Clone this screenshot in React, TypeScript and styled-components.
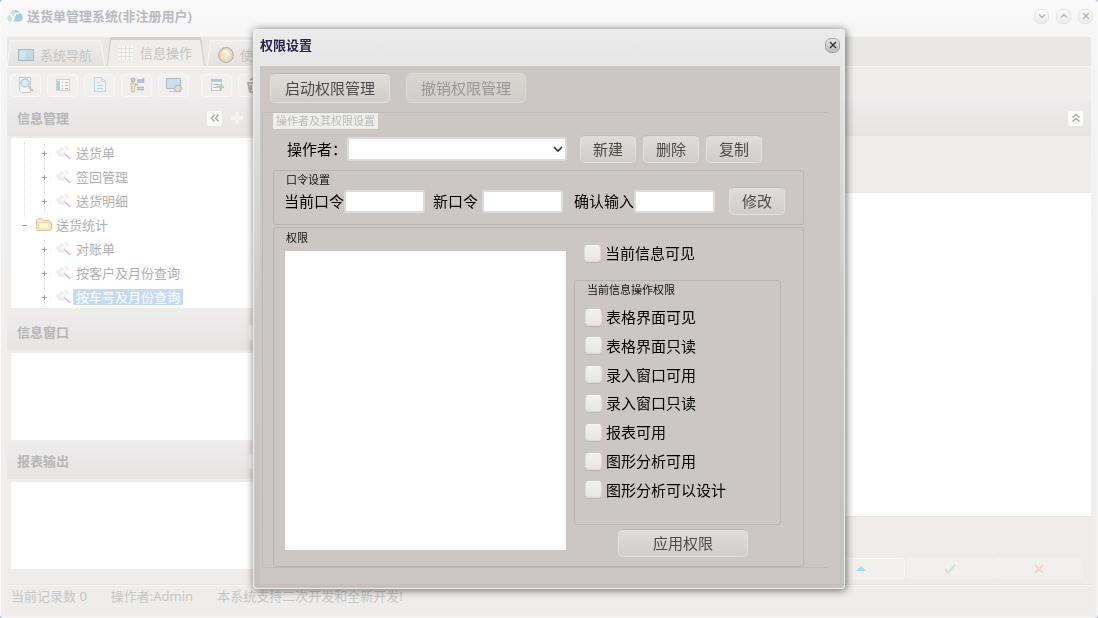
import React from 'react';
import styled, { createGlobalStyle } from 'styled-components';

const GlobalStyle = createGlobalStyle`
  * { box-sizing: border-box; }
  body { margin: 0; background: #a9bdd6; }
  body, button, input, select {
    font-family: "Noto Sans", "Noto Sans CJK SC", sans-serif;
    font-size: 13px;
    line-height: 18px;
  }
  button { margin: 0; padding: 0; border: 0; background: none; }
`;

/* ---------- Main window ---------- */

const Window = styled.div`
  display: flex;
  flex-direction: column;
  min-height: 100vh;
  padding: 0 6px 4px;
  border: 1px solid #fbfbfb;
  border-width: 0 1px 1px;
  border-radius: 4px;
  background: linear-gradient(#fafafa 0, #f6f6f6 37px, #f3f2f2 200px, #efeeec 60%);
`;

const TitleBar = styled.header`
  display: flex;
  align-items: center;
  height: 37px;
  padding: 0 0 5px;
`;

const Title = styled.h1`
  flex: 1;
  margin: 0 0 0 4px;
  font-size: 13px;
  line-height: 18px;
  font-weight: 700;
  color: #b9b9c3;
`;

const RoundButton = styled.button<{ $strong?: boolean }>`
  display: flex;
  align-items: center;
  justify-content: center;
  width: 15px;
  height: 15px;
  border: 1px solid ${(p) => (p.$strong ? '#a5a3a1' : '#e2e2e2')};
  border-radius: 6px;
  background: ${(p) => (p.$strong ? 'linear-gradient(#e6e6e6, #bdbbb9)' : 'linear-gradient(#fafafa, #ececec)')};
  color: ${(p) => (p.$strong ? '#333' : '#b5b5b5')};
`;

const WindowButtons = styled.div`
  display: flex;
  gap: 7px;
  margin-right: -2px;
`;

const TabStrip = styled.nav`
  display: flex;
  align-items: flex-end;
  gap: 2px;
  height: 30px;
  border-bottom: 1px solid #f8f8f7;
  background: #e9e8e6;
`;

const Tab = styled.button<{ $active?: boolean }>`
  position: relative;
  z-index: 0;
  display: flex;
  align-items: center;
  gap: 6px;
  width: 98px;
  height: ${(p) => (p.$active ? 29 : 26)}px;
  padding: 3px 0 0 11px;
  background: ${(p) => (p.$active ? '#d3d0cf' : '#f6f5f4')};
  clip-path: polygon(3px 0, calc(100% - 4px) 0, 100% 100%, 0 100%);
  color: #c4c4c4;
  &::before {
    content: '';
    position: absolute;
    z-index: -1;
    inset: ${(p) => (p.$active ? '3px 1px 0' : '1px 1px 0')};
    background: ${(p) => (p.$active ? '#efeeec' : 'linear-gradient(#f0efed, #e4e1e0)')};
    clip-path: polygon(3px 0, calc(100% - 4px) 0, 100% 100%, 0 100%);
  }
`;

const Toolbar = styled.div`
  display: flex;
  align-items: center;
  gap: 6px;
  height: 33px;
  padding: 3px 3px 0;
  background: #efeeec;
`;

const ToolButton = styled.button`
  display: flex;
  align-items: center;
  justify-content: center;
  width: 31px;
  height: 23px;
  border: 1px solid #f8f7f6;
  border-radius: 4px;
  background: #f1f0ee;
  &:nth-child(6) { margin-left: 6px; }
`;

const Workspace = styled.div`
  display: flex;
  flex: 1;
  background: #eeedeb;
  border-bottom: 1px solid #e6e5e3;
`;

const Sidebar = styled.aside`
  display: flex;
  flex-direction: column;
  width: 265px;
`;

const PanelHeader = styled.div<{ $inset?: boolean }>`
  display: flex;
  align-items: center;
  gap: 9px;
  height: 36px;
  padding: 0 ${(p) => (p.$inset ? 29 : 8)}px 0 10px;
  background: linear-gradient(#edebec, #e6e5e3);
`;

const PanelTitle = styled.h2`
  flex: 1;
  margin: 0;
  font-size: 13px;
  line-height: 18px;
  font-weight: 700;
  color: #b6b6b5;
`;

const CollapseButton = styled.button`
  display: flex;
  align-items: center;
  justify-content: center;
  width: 15px;
  height: 15px;
  border-radius: 2px;
  background: #fbfbfa;
  color: #a5a5a5;
`;

const PanelBody = styled.div<{ $height: number }>`
  height: ${(p) => p.$height}px;
  margin: 3px 0 3px 4px;
  overflow: hidden;
  background: #fff;
`;

const TreeBody = styled(PanelBody)`
  margin-top: 2px;
  margin-bottom: 6px;
`;

const TreeList = styled.ul`
  position: relative;
  margin: 0;
  padding: 3px 0 0;
  list-style: none;
  &::before {
    content: '';
    position: absolute;
    left: 13px;
    top: 4px;
    height: 76px;
    border-left: 1px dotted #ddd;
  }
`;

const TreeRow = styled.li<{ $leaf?: boolean }>`
  display: flex;
  align-items: center;
  height: 24px;
  padding-left: ${(p) => (p.$leaf ? 25 : 5)}px;
`;

const Expander = styled.button`
  display: flex;
  width: 16px;
  height: 24px;
  margin-right: 4px;
  color: #a0a0a0;
`;

const TreeLabel = styled.span<{ $selected?: boolean }>`
  margin-left: 1px;
  padding: 0 3px;
  line-height: 16px;
  background: ${(p) => (p.$selected ? '#c6dbf2' : 'transparent')};
  color: ${(p) => (p.$selected ? '#fff' : '#b0b0b0')};
`;

const MainArea = styled.main`
  display: flex;
  flex: 1;
  flex-direction: column;
`;

const Sheet = styled.div`
  height: 325px;
  margin-top: 56px;
  border-bottom: 1px solid #e9e8e6;
  border-top: 1px solid #e9e8e6;
  background: #fff;
`;

const Navigator = styled.div`
  display: flex;
  justify-content: flex-end;
  gap: 1px;
  margin-top: auto;
  padding: 0 8px 5px 0;
`;

const NavButton = styled.button<{ $dim?: boolean }>`
  display: flex;
  align-items: center;
  justify-content: center;
  width: 88px;
  height: 21px;
  border: 1px solid ${(p) => (p.$dim ? '#f3f2f1' : '#f8f8f7')};
  border-radius: 4px;
  background: #f1f0ef;
`;

const StatusBar = styled.footer`
  display: flex;
  gap: 24px;
  height: 28px;
  padding: 1px 4px 0;
  border-top: 1px solid #f6f5f4;
  background: #eeedeb;
  color: #c6c6c6;
`;

/* ---------- Dialog ---------- */

const Overlay = styled.div`
  position: fixed;
  inset: 0;
  display: flex;
  align-items: center;
  justify-content: center;
`;

const DialogBox = styled.section`
  width: 592px;
  padding: 0 4px 4px 6px;
  border: 1px solid #efefee;
  border-radius: 4px;
  background: linear-gradient(#ebebeb 0, #e5e5e5 40px, #cdc9c7 50%, #c6c0bd);
  box-shadow: 1px 1px 8px 0 rgba(0, 0, 0, 0.6);
`;

const DialogHeader = styled.header`
  display: flex;
  align-items: center;
  justify-content: space-between;
  height: 36px;
  padding: 0 0 6px;
`;

const DialogTitle = styled.h2`
  margin: 0;
  font-size: 13px;
  line-height: 18px;
  color: #26224a;
`;

const DialogBody = styled.form`
  padding: 7px 12px 16px 2px;
  background: #ccc7c4;
`;

const ActionRow = styled.div`
  display: flex;
  gap: 16px;
  padding-left: 8px;
`;

const PushButton = styled.button<{ $width: number; $tall?: boolean }>`
  width: ${(p) => p.$width}px;
  height: ${(p) => (p.$tall ? 30 : 28)}px;
  border: 1px solid #e2dfdc;
  border-top-color: #bfbab7;
  border-radius: 5px;
  background: linear-gradient(#e0ddda, #d1cdc8);
  font-size: 15px;
  line-height: 20px;
  color: #4a4a4a;
  &:disabled {
    border-color: #dcd9d6;
    background: linear-gradient(#d9d6d2, #d1cec9);
    color: #999795;
  }
`;

const Operators = styled.fieldset`
  display: flex;
  flex-direction: column;
  min-width: 0;
  margin: 9px 0 0;
  padding: 0 24px 0 10px;
  border: 1px solid #bfbab7;
  border-right: 0;
  border-radius: 4px 0 0 4px;
`;

const OperatorsLegend = styled.legend`
  float: left;
  align-self: flex-start;
  padding: 0 3px;
  background: #eeeeed;
  font-size: 11px;
  line-height: 16px;
  color: #b9b9b9;
`;

const OperatorRow = styled.div`
  display: flex;
  align-items: center;
  gap: 7px;
  margin-top: 6px;
  padding-left: 14px;
`;

const Label = styled.label<{ $width?: number }>`
  width: ${(p) => (p.$width ? `${p.$width}px` : 'auto')};
  font-size: 15px;
  line-height: 20px;
  white-space: nowrap;
  color: #000;
`;

const SelectWrap = styled.div`
  display: flex;
  align-items: center;
  margin-right: 10px;
`;

const OperatorSelect = styled.select`
  width: 220px;
  height: 24px;
  border: 2px solid #dddcdb;
  border-radius: 3px;
  background: #fff;
  appearance: none;
`;

const SelectArrow = styled.svg`
  position: relative;
  width: 10px;
  margin-left: -14px;
  pointer-events: none;
`;

const Group = styled.fieldset`
  display: flex;
  flex-direction: column;
  min-width: 0;
  margin: 0;
  padding: 2px 0 0 10px;
  border: 1px solid #b9b4b1;
  border-radius: 3px;
`;

const PasswordGroup = styled(Group)`
  margin-top: 7px;
  padding-bottom: 9px;
`;

const RightsGroup = styled(Group)`
  margin-top: 2px;
  padding-top: 3px;
  padding-bottom: 9px;
`;

const DetailGroup = styled(Group)`
  flex: 1;
  margin: 18px 0 4px;
  padding-bottom: 25px;
`;

const GroupLegend = styled.legend`
  float: left;
  padding: 0 0 0 2px;
  font-size: 11px;
  line-height: 13px;
  color: #111;
`;

const PasswordRow = styled.div`
  display: grid;
  grid-template-columns: 149px 141px 155px 56px;
  align-items: center;
  margin-top: 1px;
`;

const Field = styled.div`
  display: flex;
  align-items: center;
`;

const PasswordInput = styled.input`
  width: 81px;
  height: 23px;
  padding: 0 3px;
  border: 2px solid #dddcdb;
  border-radius: 3px;
  background: #fff;
`;

const RightsColumns = styled.div`
  display: grid;
  grid-template-columns: 281px 207px;
  gap: 8px;
  padding-left: 1px;
`;

const InfoList = styled.select`
  width: 100%;
  height: auto;
  margin: 7px 0;
  border: 0;
  border-radius: 0;
  background: #fff;
  appearance: none;
`;

const RightsColumn = styled.div`
  display: flex;
  flex-direction: column;
  height: 313px;
`;

const CheckRow = styled.div<{ $indent?: boolean }>`
  display: flex;
  align-items: center;
  gap: 4px;
  height: 18px;
  padding-left: ${(p) => (p.$indent ? 10 : 0)}px;
`;

const CheckBox = styled.input`
  width: 17px;
  height: 17px;
  margin: 0;
  border: 1px solid #dcdad8;
  border-top-color: #f6f6f6;
  border-radius: 4px;
  background: linear-gradient(#f1f1f0, #e7e6e4);
  box-shadow: 0 1px 0 #bbb6b3;
  appearance: none;
`;

const CheckList = styled.div`
  display: flex;
  flex: 1;
  flex-direction: column;
  justify-content: space-between;
  margin-top: 12px;
`;

const ApplyRow = styled.div`
  display: flex;
  padding-left: 44px;
`;

/* ---------- Icons ---------- */

const LogoIcon = () => (
  <svg width="16" height="14" viewBox="0 0 16 14" aria-hidden="true">
    <path d="M3 12.500C-.5 12 -.5 6.500 3 6C3 1 10 -1 12 4C16 4 17 11 13 12.500Z" fill="#c3dfec" />
    <path d="M8 1C11 1 12 3 12 4C16 4 17 11 13 12.500H8Z" fill="#a5cbe0" />
    <path d="M3.500 5L6 9M8.500 5L5.500 12M8 4.500H12" stroke="#fff" strokeWidth="1.600" fill="none" />
  </svg>
);

const GLYPHS: Record<string, string> = {
  down: 'M2 3.500L5 6.500L8 3.500',
  up: 'M2 6.500L5 3.500L8 6.500',
  close: 'M2 2L8 8M8 2L2 8',
  left2: 'M4.500 1.500L1.500 5L4.500 8.500M8.500 1.500L5.500 5L8.500 8.500',
  up2: 'M1.500 4.500L5 1.500L8.500 4.500M1.500 8.500L5 5.500L8.500 8.500',
};

const Glyph = ({ name }: { name: string }) => (
  <svg width="10" height="10" viewBox="0 0 10 10" fill="none" stroke="currentColor" strokeWidth="1.400" aria-hidden="true">
    <path d={GLYPHS[name]} />
  </svg>
);

const PlusIcon = () => (
  <svg width="12" height="12" viewBox="0 0 12 12" aria-hidden="true">
    <path d="M4 0H8V4H12V8H8V12H4V8H0V4H4Z" fill="#f4f3f2" />
  </svg>
);

const Art = ({ children, opacity = 0.45 }: { children: React.ReactNode; opacity?: number }) => (
  <svg width="16" height="16" viewBox="0 0 16 16" fill="none" opacity={opacity} aria-hidden="true">
    {children}
  </svg>
);

const ScreenIcon = () => (
  <Art opacity={0.6}>
    <rect x="0.500" y="2.500" width="15" height="11" fill="#a9d2e8" stroke="#8299aa" />
    <path d="M2 4H9L6 12H2Z" fill="#c6e4f3" />
  </Art>
);

const GridIcon = () => (
  <Art opacity={0.9}>
    <rect x="1" y="1" width="14" height="14" fill="#f8f8f7" />
    <path d="M3.500 1V15M7.500 1V15M11.500 1V15M1 3.500H15M1 7.500H15M1 11.500H15" stroke="#ddd" />
  </Art>
);

const HelpIcon = () => (
  <Art opacity={0.55}>
    <circle cx="8" cy="8" r="7.300" fill="#f7dda2" stroke="#8f8383" strokeWidth="1.200" />
    <circle cx="8" cy="8" r="5.600" fill="#fbe0a0" stroke="#efc97c" />
    <path d="M5.800 6.500C6 3.500 10.500 3.800 10.200 6.500C10 8 8 8 8 9.800M8 11V12.500" stroke="#fff" strokeWidth="2" />
  </Art>
);

const SearchPageIcon = () => (
  <Art>
    <path d="M1.500 .500H12.500V15.500H3.500L1.500 13.500Z" fill="#fff" stroke="#999" />
    <circle cx="7" cy="6" r="4" fill="#c5e8fa" stroke="#5a9dcc" strokeWidth="1.300" />
    <path d="M10 9L15 14" stroke="#e08a50" strokeWidth="2.400" />
  </Art>
);

const FormIcon = () => (
  <Art>
    <rect x="1.500" y="2.500" width="13" height="11" fill="#fff" stroke="#aaa" />
    <rect x="2" y="4" width="3" height="9" fill="#5fb0dd" />
    <path d="M7 5.500H8M10 5.500H13M7 8.500H8M10 8.500H13M7 11.500H8M10 11.500H13" stroke="#777" />
  </Art>
);

const PageIcon = () => (
  <Art>
    <path d="M2.500 .500H9.500L13.500 4.500V14.500H2.500Z" fill="#e6f6ff" stroke="#79b9db" />
    <path d="M9.500 .500V4.500H13.500M5 5.500H8M5 8.500H11M5 11.500H11" stroke="#79b9db" />
  </Art>
);

const PersonIcon = () => (
  <Art>
    <circle cx="4" cy="3" r="2" fill="#999" stroke="#666" />
    <path d="M2 6H6V10H5.500V15H2.500V10H2Z" fill="#f7cf90" stroke="#a67b50" />
    <rect x="8" y="2" width="6" height="4" fill="#8a7ae0" />
    <path d="M14.500 1V6M6 7.500H9M8 10.500H15M8 12.500H15" stroke="#777" strokeWidth="1.500" />
  </Art>
);

const GlobeScreenIcon = () => (
  <Art>
    <rect x="0.500" y="1.500" width="14" height="10" fill="#9dd0ea" stroke="#66757f" />
    <path d="M3 14.500H10" stroke="#888" />
    <circle cx="12" cy="11.500" r="3.500" fill="#c5a2dc" stroke="#666" />
    <path d="M9.500 11H14M12 8.500V14.500" stroke="#e8d25a" strokeWidth="1.300" />
  </Art>
);

const AddTableIcon = () => (
  <Art>
    <rect x="2.500" y="2.500" width="10" height="11" fill="#fff" stroke="#999" />
    <path d="M2 3.500H13" stroke="#4b90bd" strokeWidth="2.500" />
    <path d="M4 7.500H10M4 10.500H9" stroke="#777" />
    <path d="M8 10H15M11.500 7V13.500" stroke="#55b47c" strokeWidth="2" />
  </Art>
);

const BinIcon = () => (
  <Art>
    <path d="M4 3L8 1L13 5M2 6H12L11 15H4ZM5 8V13M8 8V13" stroke="#555" strokeWidth="1.600" />
  </Art>
);

const LeafIcon = () => (
  <Art opacity={0.55}>
    <path d="M0 6L6 2L8 4L11 1L13 4L9 7L10 9L7 13L5 11L3 12Z" fill="#e6e6e6" />
    <path d="M1 7L6 11M5 3L10 8M9 1L13 5" stroke="#bbb" strokeDasharray="1 1" />
    <path d="M8.500 8.500L14 14" stroke="#b678e4" strokeWidth="1.500" />
    <path d="M5 7L9 5L11 10" stroke="#fff" strokeWidth="1.300" />
  </Art>
);

const FolderIcon = () => (
  <Art opacity={0.7}>
    <path d="M.500 12.500V3.500L2.500 1.500H5.500L7.500 3.500H13.500V5L15.500 5.500V12.500L13.500 13.500H1.500Z" fill="#f6e3ac" stroke="#cfae6c" />
    <path d="M2.500 12V5.500H13V12Z" fill="#fff3c7" stroke="#e4cb8c" />
  </Art>
);

const NodeGlyph = ({ open }: { open?: boolean }) => (
  <svg width="16" height="24" viewBox="0 0 16 24" fill="none" aria-hidden="true">
    {!open && <path d="M8.500 1V8M8.500 17V24" stroke="#ddd" strokeDasharray="1 1" />}
    <path d="M14 12.500H15" stroke="#ddd" />
    <path d={open ? 'M6 12.500H11' : 'M6 12.500H11M8.500 10V15'} stroke="currentColor" />
  </svg>
);

/* ---------- Data ---------- */

const toolIcons = [
  { label: '查询', Icon: SearchPageIcon },
  { label: '表单', Icon: FormIcon },
  { label: '新建', Icon: PageIcon },
  { label: '用户', Icon: PersonIcon },
  { label: '屏幕', Icon: GlobeScreenIcon },
  { label: '添加', Icon: AddTableIcon },
  { label: '删除', Icon: BinIcon },
];

const treeItems = [
  { text: '送货单', leaf: true },
  { text: '签回管理', leaf: true },
  { text: '送货明细', leaf: true },
  { text: '送货统计', leaf: false },
  { text: '对账单', leaf: true },
  { text: '按客户及月份查询', leaf: true },
  { text: '按车号及月份查询', leaf: true, selected: true },
];

const rights = [
  '表格界面可见',
  '表格界面只读',
  '录入窗口可用',
  '录入窗口只读',
  '报表可用',
  '图形分析可用',
  '图形分析可以设计',
];

/* ---------- Page ---------- */

const SidePanel = ({ title, height }: { title: string; height: number }) => (
  <>
    <PanelHeader>
      <PanelTitle>{title}</PanelTitle>
      <CollapseButton type="button" aria-label="折叠"><Glyph name="up2" /></CollapseButton>
    </PanelHeader>
    <PanelBody $height={height} />
  </>
);

const PermissionDialog = () => (
  <Overlay>
    <DialogBox role="dialog" aria-labelledby="dialog-title">
      <DialogHeader>
        <DialogTitle id="dialog-title">权限设置</DialogTitle>
        <RoundButton $strong type="button" aria-label="关闭"><Glyph name="close" /></RoundButton>
      </DialogHeader>
      <DialogBody>
        <ActionRow>
          <PushButton type="button" $width={120} $tall>启动权限管理</PushButton>
          <PushButton type="button" $width={120} $tall disabled>撤销权限管理</PushButton>
        </ActionRow>
        <Operators>
          <OperatorsLegend>操作者及其权限设置</OperatorsLegend>
          <OperatorRow>
            <Field>
              <Label htmlFor="operator" $width={60}>操作者：</Label>
              <SelectWrap>
                <OperatorSelect id="operator" />
                <SelectArrow height="8" viewBox="0 0 10 8" fill="none" stroke="#333" strokeWidth="1.600" aria-hidden="true">
                  <path d="M1 2L5 6L9 2" />
                </SelectArrow>
              </SelectWrap>
            </Field>
            <PushButton type="button" $width={56}>新建</PushButton>
            <PushButton type="button" $width={56}>删除</PushButton>
            <PushButton type="button" $width={56}>复制</PushButton>
          </OperatorRow>
          <PasswordGroup>
            <GroupLegend>口令设置</GroupLegend>
            <PasswordRow>
              <Field>
                <Label htmlFor="current" $width={60}>当前口令</Label>
                <PasswordInput id="current" type="password" />
              </Field>
              <Field>
                <Label htmlFor="next" $width={49}>新口令</Label>
                <PasswordInput id="next" type="password" />
              </Field>
              <Field>
                <Label htmlFor="confirm" $width={60}>确认输入</Label>
                <PasswordInput id="confirm" type="password" />
              </Field>
              <PushButton type="button" $width={56}>修改</PushButton>
            </PasswordRow>
          </PasswordGroup>
          <RightsGroup>
            <GroupLegend>权限</GroupLegend>
            <RightsColumns>
              <InfoList multiple aria-label="权限" />
              <RightsColumn>
                <CheckRow $indent>
                  <CheckBox id="visible" type="checkbox" />
                  <Label htmlFor="visible">当前信息可见</Label>
                </CheckRow>
                <DetailGroup>
                  <GroupLegend>当前信息操作权限</GroupLegend>
                  <CheckList>
                    {rights.map((text, i) => (
                      <CheckRow key={text}>
                        <CheckBox id={`right-${i}`} type="checkbox" />
                        <Label htmlFor={`right-${i}`}>{text}</Label>
                      </CheckRow>
                    ))}
                  </CheckList>
                </DetailGroup>
                <ApplyRow>
                  <PushButton type="button" $width={130}>应用权限</PushButton>
                </ApplyRow>
              </RightsColumn>
            </RightsColumns>
          </RightsGroup>
        </Operators>
      </DialogBody>
    </DialogBox>
  </Overlay>
);

export default function App() {
  return (
    <>
      <GlobalStyle />
      <Window>
        <TitleBar>
          <LogoIcon />
          <Title>送货单管理系统(非注册用户)</Title>
          <WindowButtons>
            <RoundButton type="button" aria-label="最小化"><Glyph name="down" /></RoundButton>
            <RoundButton type="button" aria-label="最大化"><Glyph name="up" /></RoundButton>
            <RoundButton type="button" aria-label="关闭"><Glyph name="close" /></RoundButton>
          </WindowButtons>
        </TitleBar>
        <TabStrip>
          <Tab type="button"><ScreenIcon />系统导航</Tab>
          <Tab type="button" $active><GridIcon />信息操作</Tab>
          <Tab type="button"><HelpIcon />使</Tab>
        </TabStrip>
        <Toolbar>
          {toolIcons.map(({ label, Icon }) => (
            <ToolButton key={label} type="button" aria-label={label}><Icon /></ToolButton>
          ))}
        </Toolbar>
        <Workspace>
          <Sidebar>
            <PanelHeader $inset>
              <PanelTitle>信息管理</PanelTitle>
              <CollapseButton type="button" aria-label="折叠"><Glyph name="left2" /></CollapseButton>
              <PlusIcon />
            </PanelHeader>
            <TreeBody $height={170}>
              <TreeList>
                {treeItems.map((item) => (
                  <TreeRow key={item.text} $leaf={item.leaf}>
                    <Expander type="button" aria-label="展开"><NodeGlyph open={!item.leaf} /></Expander>
                    {item.leaf ? <LeafIcon /> : <FolderIcon />}
                    <TreeLabel $selected={item.selected}>{item.text}</TreeLabel>
                  </TreeRow>
                ))}
              </TreeList>
            </TreeBody>
            <SidePanel title="信息窗口" height={87} />
            <SidePanel title="报表输出" height={87} />
          </Sidebar>
          <MainArea>
            <PanelHeader>
              <PanelTitle />
              <CollapseButton type="button" aria-label="折叠"><Glyph name="up2" /></CollapseButton>
            </PanelHeader>
            <Sheet />
            <Navigator>
              <NavButton type="button" aria-label="上移">
                <svg width="10" height="5" viewBox="0 0 10 5" aria-hidden="true"><path d="M0 5L5 0L10 5Z" fill="#a3dce5" /></svg>
              </NavButton>
              <NavButton type="button" $dim aria-label="确定">
                <svg width="12" height="10" viewBox="0 0 12 10" fill="none" aria-hidden="true"><path d="M1 5L4 8.500L11 1" stroke="#cfe3da" strokeWidth="2" /></svg>
              </NavButton>
              <NavButton type="button" $dim aria-label="取消">
                <svg width="10" height="10" viewBox="0 0 10 10" fill="none" aria-hidden="true"><path d="M1 1L9 9M9 1L1 9" stroke="#f5d3d0" strokeWidth="2" /></svg>
              </NavButton>
            </Navigator>
          </MainArea>
        </Workspace>
        <StatusBar>
          <span>当前记录数 0</span>
          <span>操作者:Admin</span>
          <span>本系统支持二次开发和全新开发!</span>
        </StatusBar>
      </Window>
      <PermissionDialog />
    </>
  );
}
